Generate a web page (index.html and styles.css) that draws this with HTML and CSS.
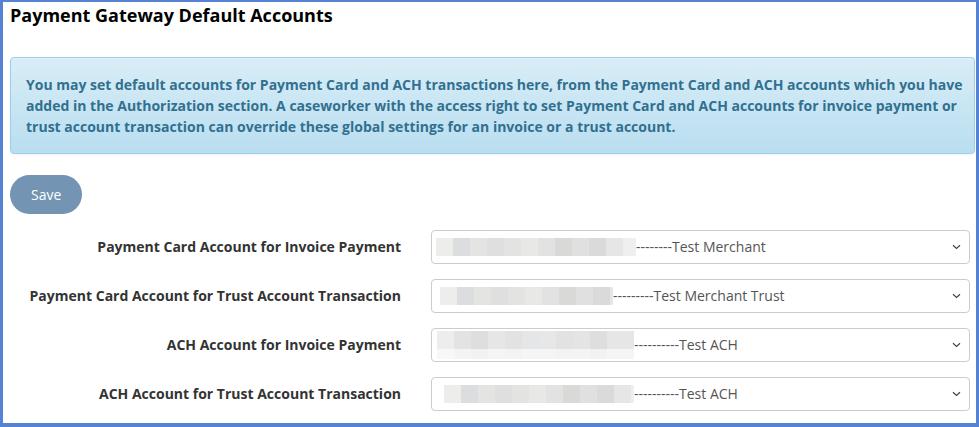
FILE: index.html
```html
<!DOCTYPE html>
<html lang="en">
<head>
    <meta charset="UTF-8">
    <meta name="viewport" content="width=device-width, initial-scale=1.0">
    <title>Payment Gateway Default Accounts</title>
    <link rel="stylesheet" href="styles.css">
</head>
<body>
    <div class="frame">
        <h3 class="page-title">Payment Gateway Default Accounts</h3>

        <div class="alert-info">
            You may set default accounts for Payment Card and ACH transactions here, from the Payment Card and ACH accounts which you have
            added in the Authorization section. A caseworker with the access right to set Payment Card and ACH accounts for invoice payment or
            trust account transaction can override these global settings for an invoice or a trust account.
        </div>

        <button class="btn-save" type="button">Save</button>

        <form class="settings">
            <div class="form-row">
                <label class="form-label">Payment Card Account for Invoice Payment</label>
                <div class="fake-select">
                    <span class="redacted redacted-1"></span><span class="option-text">--------Test Merchant</span>
                    <svg class="caret" width="9" height="6" viewBox="0 0 9 6"><path d="M1 1.2 L4.5 4.5 L8 1.2" fill="none" stroke="#444" stroke-width="1.2"/></svg>
                </div>
            </div>
            <div class="form-row">
                <label class="form-label">Payment Card Account for Trust Account Transaction</label>
                <div class="fake-select">
                    <span class="redacted redacted-2"></span><span class="option-text">---------Test Merchant Trust</span>
                    <svg class="caret" width="9" height="6" viewBox="0 0 9 6"><path d="M1 1.2 L4.5 4.5 L8 1.2" fill="none" stroke="#444" stroke-width="1.2"/></svg>
                </div>
            </div>
            <div class="form-row">
                <label class="form-label">ACH Account for Invoice Payment</label>
                <div class="fake-select">
                    <span class="redacted redacted-3"></span><span class="option-text">----------Test ACH</span>
                    <svg class="caret" width="9" height="6" viewBox="0 0 9 6"><path d="M1 1.2 L4.5 4.5 L8 1.2" fill="none" stroke="#444" stroke-width="1.2"/></svg>
                </div>
            </div>
            <div class="form-row">
                <label class="form-label">ACH Account for Trust Account Transaction</label>
                <div class="fake-select">
                    <span class="redacted redacted-4"></span><span class="option-text">----------Test ACH</span>
                    <svg class="caret" width="9" height="6" viewBox="0 0 9 6"><path d="M1 1.2 L4.5 4.5 L8 1.2" fill="none" stroke="#444" stroke-width="1.2"/></svg>
                </div>
            </div>
        </form>
    </div>
</body>
</html>
```

FILE: styles.css
```css
* {
    box-sizing: border-box;
}

body {
    margin: 0;
    background-color: white;
    font-family: "Open Sans", "Noto Sans", Arial, sans-serif;
    font-size: 14px;
    color: #333;
}

.frame {
    height: 427px;
    overflow: hidden;
    border-style: solid;
    border-color: #5582d2;
    border-width: 2px 3px 4px 3px;
    padding: 0 1px 0 7px;
}

.page-title {
    margin: 4px 0 0;
    font-size: 18px;
    line-height: 1.1;
    font-weight: 700;
    color: #000;
}

.alert-info {
    margin-top: 31px;
    padding: 16px 8px 16px 15px;
    font-weight: 700;
    line-height: 21px;
    color: #31708f;
    background-image: linear-gradient(to bottom, #d9edf7 0, #b9def0 100%);
    border: 1px solid #9acfea;
    border-radius: 4px;
    box-shadow: inset 0 1px 0 rgba(255, 255, 255, .25), 0 1px 2px rgba(0, 0, 0, .05);
}

.btn-save {
    display: block;
    margin-top: 21px;
    padding: 9px 21px;
    font-family: inherit;
    font-size: 14px;
    line-height: 21px;
    color: white;
    background-color: #7394b3;
    border: none;
    border-radius: 20px;
}

.settings {
    margin-top: 16px;
}

.form-row {
    display: grid;
    grid-template-columns: 391px 539px;
    column-gap: 30px;
    align-items: center;
    margin-bottom: 15px;
}

.form-label {
    text-align: right;
    font-weight: 700;
    color: #333;
}

.fake-select {
    display: flex;
    align-items: center;
    height: 34px;
    padding: 0 8px 0 4px;
    border: 1px solid #ccc;
    border-radius: 4px;
    color: #555;
    white-space: nowrap;
}

.option-text {
    flex: 1;
}

.caret {
    flex: none;
}

.redacted {
    display: inline-block;
    height: 18px;
    background-image: linear-gradient(90deg,
        #ededec 0 17px, #dcdddf 17px 34px, #e4e4e3 34px 51px, #dfdfe0 51px 68px,
        #e3e3e2 68px 85px, #e8e8e7 85px 102px, #e2e2e2 102px 119px, #d9d9d8 119px 136px,
        #e0e0e0 136px 153px, #dadada 153px 170px, #e6e6e6 170px 187px, #efefef 187px 204px);
}

.redacted-1 {
    width: 200px;
    margin-left: 0;
    background-color: #f7f7f7;
}

.redacted-2 {
    width: 173px;
    margin-left: 4px;
}

.redacted-3 {
    width: 197px;
    height: 28px;
    margin-left: 1px;
    background-image:
        linear-gradient(to bottom, transparent 0 18px, rgba(255, 255, 255, .6) 18px 28px),
        linear-gradient(90deg,
        #ededed 0 17px, #e3e3e3 17px 34px, #dedede 34px 51px, #e6e6e6 51px 68px,
        #e2e2e3 68px 85px, #e5e6e7 85px 102px, #e7e7e7 102px 119px, #e2e2e2 119px 136px,
        #e4e4e4 136px 153px, #dedede 153px 170px, #e6e6e6 170px 197px);
}

.redacted-4 {
    width: 190px;
    margin-left: 8px;
}
```
